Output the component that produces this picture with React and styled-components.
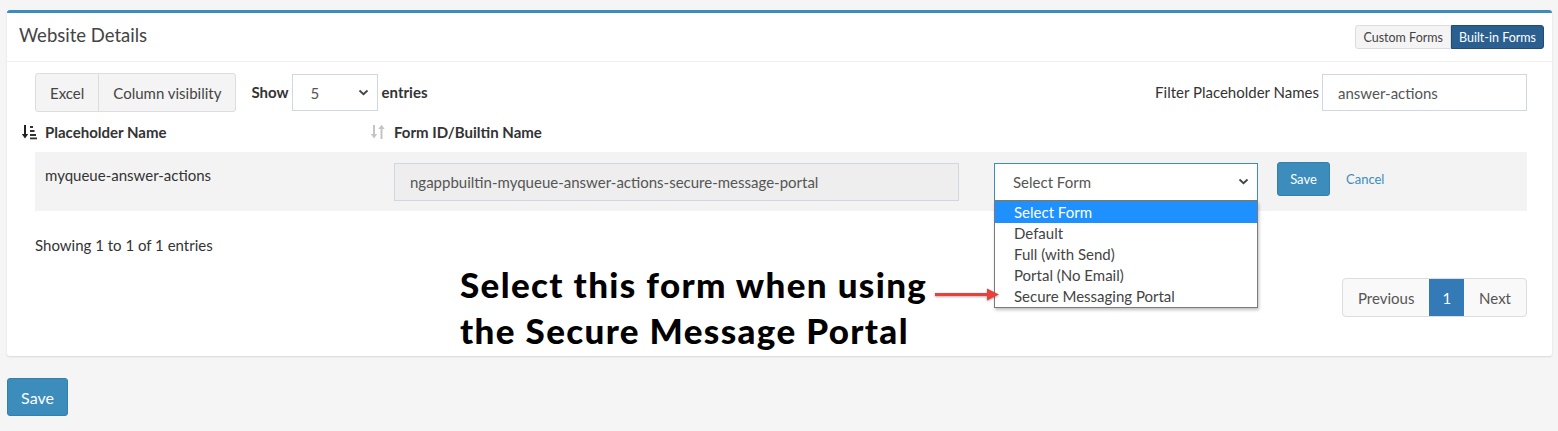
import React from 'react';
import styled, { createGlobalStyle } from 'styled-components';

const GlobalStyle = createGlobalStyle`
    body {
        margin: 0;
        background: #f5f5f5;
        font-family: Lato, "Open Sans", sans-serif;
        color: #333;
    }
`;

const Page = styled.div`
    padding: 10px 6px 0 7px;
    width: 1558px;
    box-sizing: border-box;
`;

const Card = styled.div`
    background: #fff;
    border-top: 3px solid #3c8dbc;
    border-radius: 3px;
    box-shadow: 0 1px 2px rgba(0,0,0,0.12);
`;

const CardHeader = styled.div`
    display: flex;
    align-items: center;
    justify-content: space-between;
    height: 48px;
    padding: 0 8px 0 12px;
    border-bottom: 1px solid #f0f0f0;
`;

const Title = styled.h3`
    margin: 0 0 4px;
    font-size: 18.5px;
    font-weight: 400;
    color: #444;
`;

const Toggle = styled.div`
    display: flex;
`;

const ToggleButton = styled.button`
    font-family: inherit;
    font-size: 12.5px;
    height: 24px;
    padding: 0 7px;
    border: 1px solid ${({active}) => active ? '#204d74' : '#ddd'};
    background: ${({active}) => active ? '#2a5f8f' : '#f4f4f4'};
    color: ${({active}) => active ? '#fff' : '#444'};
    border-radius: ${({active}) => active ? '0 3px 3px 0' : '3px 0 0 3px'};
`;

const CardBody = styled.div`
    position: relative;
    padding: 12px 25px 39px 28px;
`;

const Controls = styled.div`
    display: flex;
    align-items: center;
    height: 37px;
`;

const ButtonGroup = styled.div`
    display: flex;
    height: 37px;
    border: 1px solid #ddd;
    border-radius: 3px;
    background: #f4f4f4;
`;

const GroupButton = styled.button`
    font-family: inherit;
    font-size: 15px;
    color: #444;
    background: none;
    border: none;
    padding: 0 14px;
    & + & {
        border-left: 1px solid #ddd;
    }
`;

const Label = styled.span`
    font-size: 15px;
    font-weight: ${({bold}) => bold ? 700 : 400};
    color: #333;
    margin: 0 3px 0 ${({left}) => left || 0}px;
    padding-bottom: 2px;
`;

const SelectBox = styled.div`
    display: flex;
    align-items: center;
    justify-content: space-between;
    box-sizing: border-box;
    width: ${({w}) => w}px;
    height: ${({h}) => h || 37}px;
    padding: 0 8px 0 ${({pl}) => pl || 18}px;
    border: 1px solid ${({focused}) => focused ? '#3c8dbc' : '#d2d6de'};
    background: #fff;
    font-size: 15px;
    color: #555;
`;

const Spacer = styled.div`
    flex: 1;
`;

const TextInput = styled.div`
    display: flex;
    align-items: center;
    box-sizing: border-box;
    width: ${({w}) => w}px;
    height: ${({h}) => h || 37}px;
    padding: 0 15px;
    border: 1px solid #d2d6de;
    background: ${({readOnly}) => readOnly ? '#eee' : '#fff'};
    font-size: 15px;
    color: #555;
    white-space: nowrap;
`;

const Table = styled.div`
    margin-top: 0;
`;

const HeadRow = styled.div`
    display: grid;
    grid-template-columns: 349px 600px 1fr;
    height: 41px;
    align-items: center;
`;

const Th = styled.div`
    display: flex;
    align-items: center;
    padding-left: 10px;
    font-size: 15px;
    font-weight: 700;
    color: #333;
`;

const SortIcon = styled.svg`
    margin-left: -24px;
    margin-right: 8px;
`;

const DataRow = styled.div`
    display: grid;
    grid-template-columns: 349px 600px 1fr;
    height: 59px;
    background: #f3f3f3;
`;

const Td = styled.div`
    display: flex;
    align-items: ${({top}) => top ? 'flex-start' : 'center'};
    padding: ${({top}) => top ? '14px 10px' : '0 10px'};
    font-size: 15px;
    color: #333;
`;

const ActionCell = styled(Td)`
    position: relative;
`;

const SaveSmall = styled.button`
    font-family: inherit;
    font-size: 13px;
    color: #fff;
    background: #3c8dbc;
    border: 1px solid #367fa9;
    border-radius: 3px;
    height: 34px;
    width: 53px;
    margin: 0 16px 5px 19px;
`;

const LinkText = styled.a`
    font-size: 13px;
    color: #3c8dbc;
    margin-bottom: 5px;
`;

const DropList = styled.ul`
    position: absolute;
    top: 49px;
    left: 10px;
    width: 264px;
    box-sizing: border-box;
    margin: 0;
    padding: 0;
    list-style: none;
    background: #fff;
    border: 1px solid #7a7a7a;
    box-shadow: 1px 2px 3px rgba(0,0,0,0.25);
    z-index: 5;
`;

const DropItem = styled.li`
    height: 21px;
    line-height: 21px;
    padding-left: 19px;
    font-size: 15px;
    background: ${({selected}) => selected ? '#1e90ff' : 'transparent'};
    color: ${({selected}) => selected ? '#fff' : '#444'};
`;

const Info = styled.div`
    font-size: 15px;
    color: #333;
    margin-top: 25px;
`;

const PagerRow = styled.div`
    display: flex;
    justify-content: flex-end;
    margin-top: 24px;
`;

const Pager = styled.div`
    display: flex;
    height: 37px;
    border: 1px solid #ddd;
    border-radius: 4px;
    overflow: hidden;
    background: #f9f9f9;
`;

const PageItem = styled.span`
    display: flex;
    align-items: center;
    padding: 0 ${({active}) => active ? 13 : 15}px;
    font-size: 15px;
    color: ${({active}) => active ? '#fff' : '#555'};
    background: ${({active}) => active ? '#337ab7' : 'transparent'};
`;

const Annotation = styled.div`
    position: absolute;
    left: 453px;
    top: 199px;
    display: flex;
    align-items: flex-start;
    z-index: 6;
`;

const AnnotationText = styled.div`
    font-size: 35px;
    font-weight: 900;
    line-height: 46px;
    color: #000;
    letter-spacing: 1.35px;
`;

const Arrow = styled.svg`
    margin-top: 26px;
    margin-left: 8px;
    filter: drop-shadow(0 1px 1px rgba(0,0,0,0.3));
`;

const SaveButton = styled.button`
    font-family: inherit;
    margin-top: 22px;
    height: 38px;
    width: 61px;
    font-size: 16px;
    color: #fff;
    background: #3c8dbc;
    border: 1px solid #367fa9;
    border-radius: 3px;
`;

const Chevron = () => (
    <svg width="11" height="7" viewBox="0 0 11 7">
        <path d="M1.5 1.5 L5.5 5.2 L9.5 1.5" fill="none" stroke="#444" strokeWidth="1.8"/>
    </svg>
);

const options = ['Select Form', 'Default', 'Full (with Send)', 'Portal (No Email)', 'Secure Messaging Portal'];

const App = () => (
    <Page>
        <GlobalStyle/>
        <Card>
            <CardHeader>
                <Title>Website Details</Title>
                <Toggle>
                    <ToggleButton>Custom Forms</ToggleButton>
                    <ToggleButton active>Built-in Forms</ToggleButton>
                </Toggle>
            </CardHeader>
            <CardBody>
                <Controls>
                    <ButtonGroup>
                        <GroupButton>Excel</GroupButton>
                        <GroupButton>Column visibility</GroupButton>
                    </ButtonGroup>
                    <Label bold left={15}>Show</Label>
                    <SelectBox w={86}><span>5</span><Chevron/></SelectBox>
                    <Label bold left={4}>entries</Label>
                    <Spacer/>
                    <Label>Filter Placeholder Names</Label>
                    <TextInput w={205}>answer-actions</TextInput>
                </Controls>
                <Table>
                    <HeadRow>
                        <Th>
                            <SortIcon width="16" height="16" viewBox="0 0 16 16">
                                <path d="M4 1 V13" stroke="#222" strokeWidth="2"/>
                                <path d="M0.8 10 L4 14.5 L7.2 10 Z" fill="#222"/>
                                <rect x="9" y="2" width="3" height="2" fill="#333"/>
                                <rect x="9" y="6" width="4.5" height="2" fill="#333"/>
                                <rect x="9" y="10" width="6" height="2" fill="#333"/>
                                <rect x="9" y="13.5" width="7" height="1.8" fill="#333"/>
                            </SortIcon>
                            Placeholder Name
                        </Th>
                        <Th>
                            <SortIcon width="16" height="16" viewBox="0 0 16 16">
                                <path d="M4 1 V13" stroke="#c4c4c4" strokeWidth="2"/>
                                <path d="M0.8 10 L4 14.5 L7.2 10 Z" fill="#c4c4c4"/>
                                <path d="M11.5 3 V15" stroke="#c4c4c4" strokeWidth="2"/>
                                <path d="M8.3 5 L11.5 0.8 L14.7 5 Z" fill="#c4c4c4"/>
                            </SortIcon>
                            Form ID/Builtin Name
                        </Th>
                        <div/>
                    </HeadRow>
                    <DataRow>
                        <Td top>myqueue-answer-actions</Td>
                        <Td>
                            <TextInput readOnly w={565} h={38}>ngappbuiltin-myqueue-answer-actions-secure-message-portal</TextInput>
                        </Td>
                        <ActionCell>
                            <SelectBox focused w={264} h={38}><span>Select Form</span><Chevron/></SelectBox>
                            <SaveSmall>Save</SaveSmall>
                            <LinkText>Cancel</LinkText>
                            <DropList>
                                {options.map((o, i) => <DropItem key={o} selected={i === 0}>{o}</DropItem>)}
                            </DropList>
                        </ActionCell>
                    </DataRow>
                </Table>
                <Info>Showing 1 to 1 of 1 entries</Info>
                <PagerRow>
                    <Pager>
                        <PageItem>Previous</PageItem>
                        <PageItem active>1</PageItem>
                        <PageItem>Next</PageItem>
                    </Pager>
                </PagerRow>
                <Annotation>
                    <AnnotationText>
                        Select this form when using<br/>the Secure Message Portal
                    </AnnotationText>
                    <Arrow width="68" height="14" viewBox="0 0 68 14">
                        <path d="M0 7.5 H56" stroke="#e8403c" strokeWidth="3"/>
                        <path d="M52 1.5 L64 7.5 L52 13.5 Z" fill="#e8403c"/>
                    </Arrow>
                </Annotation>
            </CardBody>
        </Card>
        <SaveButton>Save</SaveButton>
    </Page>
);

export default App;
